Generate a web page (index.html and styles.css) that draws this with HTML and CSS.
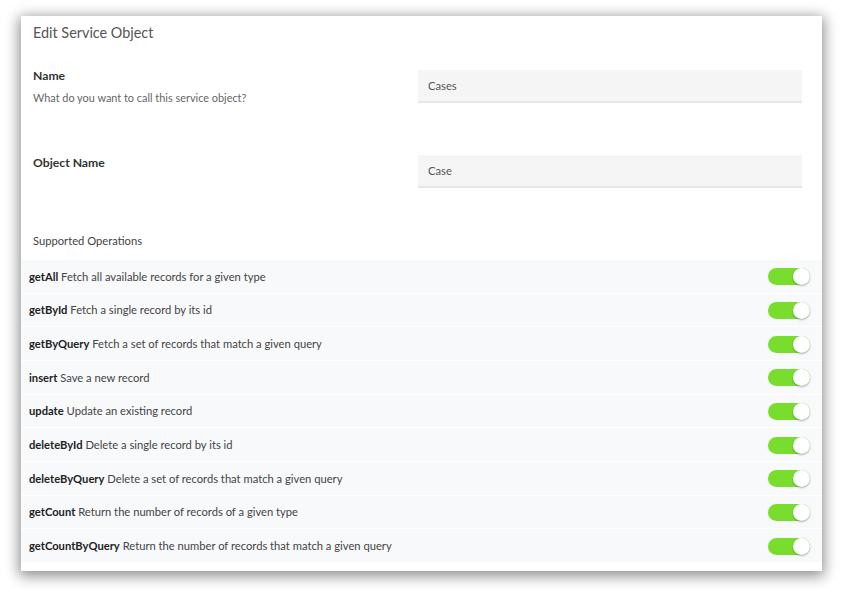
FILE: index.html
```html
<!DOCTYPE html>
<html>
<head>
<meta charset="utf-8">
<link rel="stylesheet" href="styles.css">
</head>
<body>
<div class="card">
  <div class="title">Edit Service Object</div>
  <div class="field field-name">
    <div class="label-col">
      <div class="label">Name</div>
      <div class="desc">What do you want to call this service object?</div>
    </div>
    <div class="input">Cases</div>
  </div>
  <div class="field field-object">
    <div class="label-col">
      <div class="label">Object Name</div>
    </div>
    <div class="input">Case</div>
  </div>
  <div class="section">Supported Operations</div>
  <div class="ops">
    <div class="op"><span class="op-text"><b>getAll</b> Fetch all available records for a given type</span><span class="toggle"><span class="knob"></span></span></div>
    <div class="op"><span class="op-text"><b>getById</b> Fetch a single record by its id</span><span class="toggle"><span class="knob"></span></span></div>
    <div class="op"><span class="op-text"><b>getByQuery</b> Fetch a set of records that match a given query</span><span class="toggle"><span class="knob"></span></span></div>
    <div class="op"><span class="op-text"><b>insert</b> Save a new record</span><span class="toggle"><span class="knob"></span></span></div>
    <div class="op"><span class="op-text"><b>update</b> Update an existing record</span><span class="toggle"><span class="knob"></span></span></div>
    <div class="op"><span class="op-text"><b>deleteById</b> Delete a single record by its id</span><span class="toggle"><span class="knob"></span></span></div>
    <div class="op"><span class="op-text"><b>deleteByQuery</b> Delete a set of records that match a given query</span><span class="toggle"><span class="knob"></span></span></div>
    <div class="op"><span class="op-text"><b>getCount</b> Return the number of records of a given type</span><span class="toggle"><span class="knob"></span></span></div>
    <div class="op"><span class="op-text"><b>getCountByQuery</b> Return the number of records that match a given query</span><span class="toggle"><span class="knob"></span></span></div>
  </div>
</div>
</body>
</html>
```
FILE: styles.css
```css
* { box-sizing: border-box; }
html, body { margin: 0; padding: 0; background: #ffffff; }
html { height: 100%; }
body {
  font-family: Lato, "Open Sans", "Liberation Sans", sans-serif;
  color: #444;
  min-height: 100%;
  padding: 16px 0 19px 21px;
}
.card {
  width: 801px;
  height: 555px;
  background: #fff;
  box-shadow: 0 3px 13px 2px rgba(0,0,0,0.45);
  padding-top: 7px;
}
.title {
  font-size: 14.4px;
  line-height: 20px;
  color: #555;
  padding-left: 12px;
}
.field {
  display: flex;
  justify-content: space-between;
  padding: 0 20px 0 12px;
}
.field-name { margin-top: 25px; height: 40px; }
.field-object { margin-top: 47px; height: 33px; }
.label {
  font-size: 12.2px;
  font-weight: 700;
  line-height: 16px;
  color: #333;
}
.desc {
  font-size: 10.9px;
  line-height: 16px;
  margin-top: 6px;
  color: #666;
}
.input {
  width: 384px;
  height: 33px;
  background: #f5f5f5;
  border-bottom: 2px solid #e6e6e6;
  font-size: 11.2px;
  line-height: 31px;
  padding-left: 10px;
  color: #555;
}
.field-name .input { margin-top: 2px; }
.section {
  margin-top: 45px;
  padding-left: 12px;
  font-size: 11.2px;
  line-height: 16px;
  color: #444;
}
.ops {
  margin-top: 11px;
  display: flex;
  flex-direction: column;
  gap: 1px;
}
.op {
  height: 32.67px;
  background: #f8f9fb;
  display: flex;
  align-items: center;
  justify-content: space-between;
  padding: 0 12px 0 8px;
  font-size: 11.2px;
  color: #444;
}
.op b { color: #222; font-weight: 700; }
.toggle {
  position: relative;
  width: 42px;
  height: 17px;
  border-radius: 9px;
  background: #79dd2d;
  margin-top: 1px;
}
.knob {
  position: absolute;
  right: 0;
  top: 0;
  width: 17px;
  height: 17px;
  border-radius: 50%;
  background: #fff;
  box-shadow: 0 1px 2px rgba(0,0,0,0.3);
}
```
